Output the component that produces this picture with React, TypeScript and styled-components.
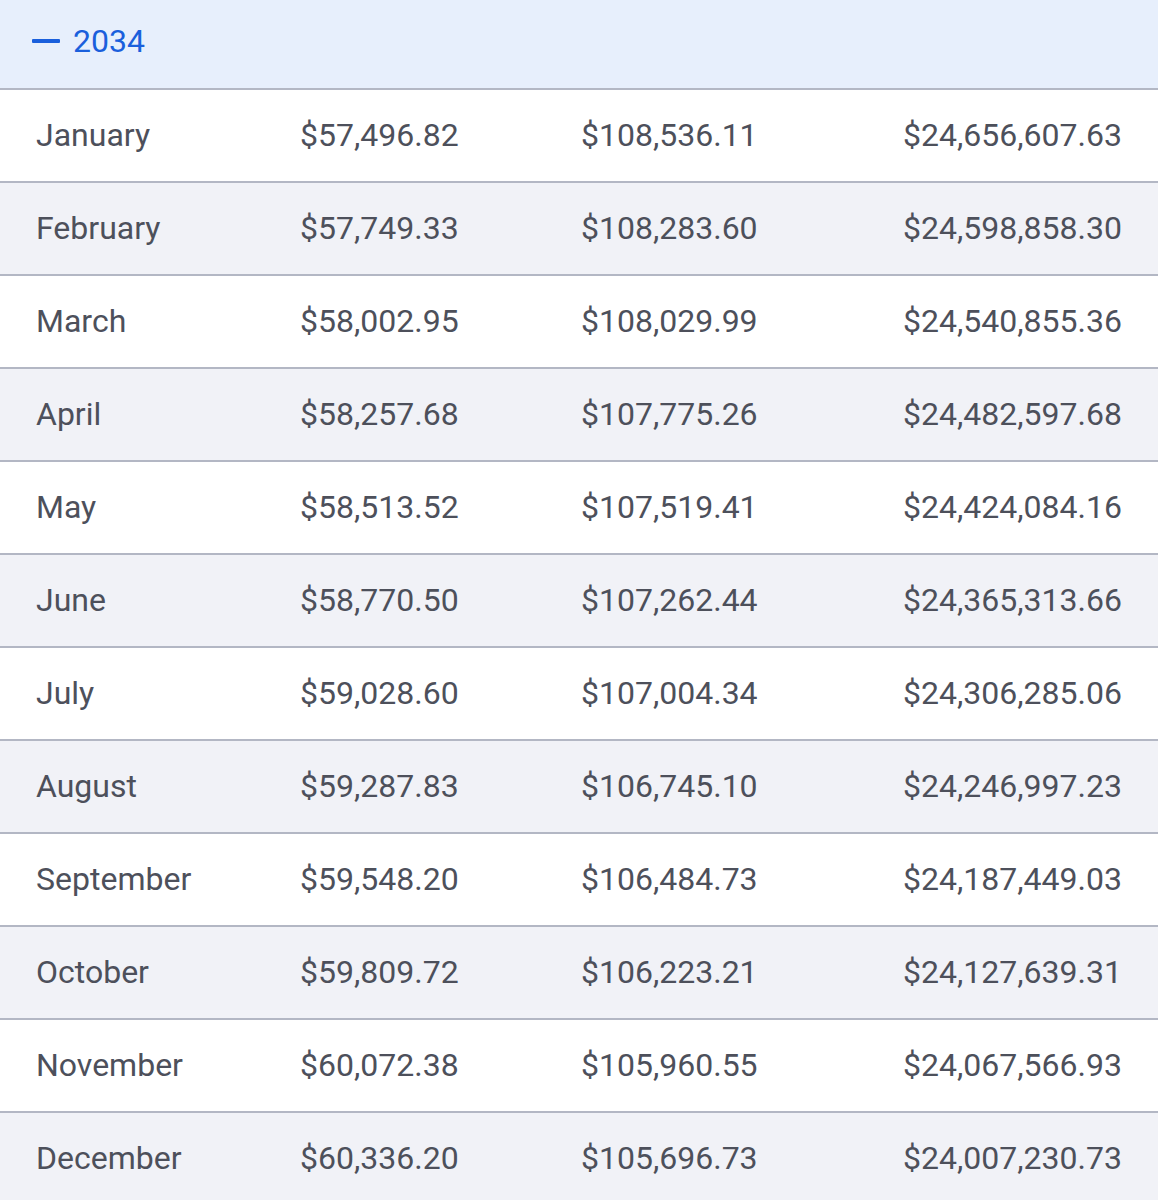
import React from "react";
import styled, { createGlobalStyle } from "styled-components";

const GlobalStyle = createGlobalStyle`
  html, body {
    margin: 0;
    padding: 0;
    background: #ffffff;
  }
  body {
    font-family: Roboto, "Liberation Sans", Arial, sans-serif;
    -webkit-font-smoothing: antialiased;
  }
`;

const Table = styled.div`
  width: 1158px;
  display: flex;
  flex-direction: column;
`;

const YearHeader = styled.div`
  height: 88px;
  box-sizing: border-box;
  display: flex;
  align-items: center;
  gap: 13px;
  padding: 0 0 6px 32px;
  background: #e7effc;
  color: #1a5fdc;
  font-size: 32px;
  font-weight: 400;
`;

const Dash = styled.span`
  display: block;
  width: 28px;
  height: 4px;
  border-radius: 1px;
  background: #1a5fdc;
`;

const Row = styled.div<{ $alt: boolean }>`
  height: 93px;
  box-sizing: border-box;
  border-top: 2px solid #b3b7c4;
  padding-bottom: 2px;
  background: ${(p) => (p.$alt ? "#f1f2f7" : "#ffffff")};
  display: grid;
  grid-template-columns: 264px 281px 322px 1fr;
  align-items: center;
  color: #4d505b;
  font-size: 32px;
  font-weight: 400;
`;

const Cell = styled.div`
  padding-left: 36px;
  white-space: nowrap;
`;

const rows: [string, string, string, string][] = [
  ["January", "$57,496.82", "$108,536.11", "$24,656,607.63"],
  ["February", "$57,749.33", "$108,283.60", "$24,598,858.30"],
  ["March", "$58,002.95", "$108,029.99", "$24,540,855.36"],
  ["April", "$58,257.68", "$107,775.26", "$24,482,597.68"],
  ["May", "$58,513.52", "$107,519.41", "$24,424,084.16"],
  ["June", "$58,770.50", "$107,262.44", "$24,365,313.66"],
  ["July", "$59,028.60", "$107,004.34", "$24,306,285.06"],
  ["August", "$59,287.83", "$106,745.10", "$24,246,997.23"],
  ["September", "$59,548.20", "$106,484.73", "$24,187,449.03"],
  ["October", "$59,809.72", "$106,223.21", "$24,127,639.31"],
  ["November", "$60,072.38", "$105,960.55", "$24,067,566.93"],
  ["December", "$60,336.20", "$105,696.73", "$24,007,230.73"],
];

export default function App() {
  return (
    <>
      <GlobalStyle />
      <Table>
        <YearHeader>
          <Dash />
          <span>2034</span>
        </YearHeader>
        {rows.map((r, i) => (
          <Row key={r[0]} $alt={i % 2 === 1}>
            {r.map((c, j) => (
              <Cell key={j}>{c}</Cell>
            ))}
          </Row>
        ))}
      </Table>
    </>
  );
}
